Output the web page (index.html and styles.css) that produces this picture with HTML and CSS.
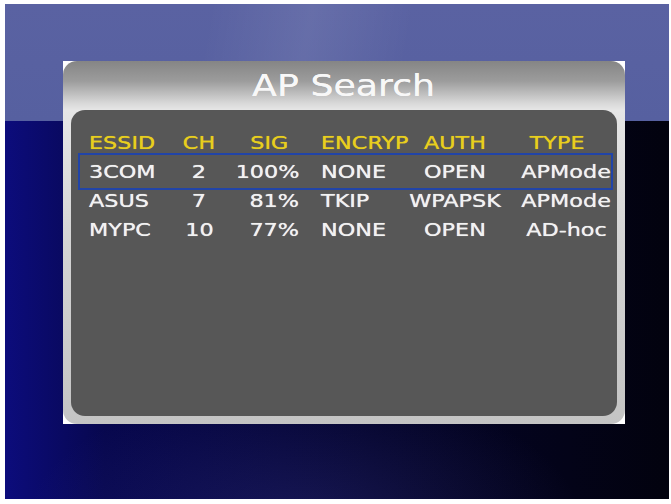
FILE: index.html
```html
<!DOCTYPE html>
<html>
<head>
  <title>AP Search</title>
  <link rel="stylesheet" href="styles.css">
</head>
<body>
  <div class="screen">
    <div class="panel">
      <div class="frame">
        <h1 class="title"><span class="wide">AP Search</span></h1>
        <div class="list">
          <div class="ap-table">
            <div class="row head">
              <div class="cell essid"><span class="wide">ESSID</span></div>
              <div class="cell ch"><span class="wide">CH</span></div>
              <div class="cell sig"><span class="wide">SIG</span></div>
              <div class="cell encryp"><span class="wide">ENCRYP</span></div>
              <div class="cell auth"><span class="wide">AUTH</span></div>
              <div class="cell type"><span class="wide">TYPE</span></div>
            </div>
            <div class="row selected">
              <div class="cell essid"><span class="wide">3COM</span></div>
              <div class="cell ch"><span class="wide">2</span></div>
              <div class="cell sig"><span class="wide">100%</span></div>
              <div class="cell encryp"><span class="wide">NONE</span></div>
              <div class="cell auth"><span class="wide">OPEN</span></div>
              <div class="cell type"><span class="wide">APMode</span></div>
            </div>
            <div class="row">
              <div class="cell essid"><span class="wide">ASUS</span></div>
              <div class="cell ch"><span class="wide">7</span></div>
              <div class="cell sig"><span class="wide">81%</span></div>
              <div class="cell encryp"><span class="wide">TKIP</span></div>
              <div class="cell auth"><span class="wide">WPAPSK</span></div>
              <div class="cell type"><span class="wide">APMode</span></div>
            </div>
            <div class="row">
              <div class="cell essid"><span class="wide">MYPC</span></div>
              <div class="cell ch"><span class="wide">10</span></div>
              <div class="cell sig"><span class="wide">77%</span></div>
              <div class="cell encryp"><span class="wide">NONE</span></div>
              <div class="cell auth"><span class="wide">OPEN</span></div>
              <div class="cell type"><span class="wide">AD-hoc</span></div>
            </div>
          </div>
        </div>
      </div>
    </div>
  </div>
</body>
</html>
```

FILE: styles.css
```css
body {
  margin: 0;
  padding: 0;
  background-color: #ffffff;
  font-family: "DejaVu Sans", Verdana, sans-serif;
}

.screen {
  margin: 4px 2px 0 5px;
  height: 495px;
  overflow: hidden;
  background:
    linear-gradient(100deg, transparent 30%, rgba(255, 255, 255, 0.08) 45%, transparent 60%) 0 0 / 100% 117px no-repeat,
    linear-gradient(to bottom, #5a62a2 0, #5660a0 117px, transparent 117px),
    radial-gradient(ellipse 60% 40% at 45% 105%, rgba(90, 90, 200, 0.22), transparent 70%),
    linear-gradient(to right, #0c0c7c 0, #07074e 15%, #04042c 55%, #030318 85%, #02020e 100%);
  padding-top: 57px;
  box-sizing: border-box;
}

.panel {
  margin-left: 58px;
  width: 562px;
  height: 363px;
  background-color: #ffffff;
}

.frame {
  height: 100%;
  border-radius: 14px;
  background: linear-gradient(to bottom, #858585 0, #9c9c9c 20px, #d8d8d8 42px, #e6e6e6 49px, #d4d4d4 50%, #c4c4c4 100%);
  display: flex;
  flex-direction: column;
}

.title {
  margin: 0;
  height: 49px;
  line-height: 50px;
  text-align: center;
  color: #f8f8f8;
  font-size: 30px;
  font-weight: normal;
  text-shadow: 0 0 0.6px #f8f8f8;
}

.wide {
  display: inline-block;
  transform: scaleX(1.24);
}

.title .wide {
  transform: scaleX(1.21);
}

.list {
  flex: 1;
  margin: 0 8px 8px 8px;
  border-radius: 14px;
  background-color: #575757;
  padding: 18px 8px 0 11px;
}

.row {
  display: grid;
  grid-template-columns: 88px 58px 72px 112px 86px 1fr;
  height: 29px;
  line-height: 29px;
  font-size: 18px;
  color: #f2f2f2;
  white-space: nowrap;
  text-shadow: 0 0 0.6px currentColor;
}

.head {
  color: #e8cf1e;
}

.selected {
  outline: 2px solid #2144a8;
  outline-offset: 2px;
}

.cell {
  display: flex;
}

.essid {
  padding-left: 7px;
}

.essid .wide, .encryp .wide {
  transform-origin: left center;
}

.ch, .auth, .type {
  justify-content: center;
}

.sig {
  justify-content: flex-end;
  padding-right: 1px;
}

.sig .wide {
  transform-origin: right center;
}

.head .sig {
  justify-content: center;
  padding-left: 10px;
  padding-right: 0;
}

.head .sig .wide {
  transform-origin: center;
}

.encryp {
  padding-left: 21px;
}

.type {
  padding-left: 25px;
}

.head .type {
  padding-left: 7px;
}
```
